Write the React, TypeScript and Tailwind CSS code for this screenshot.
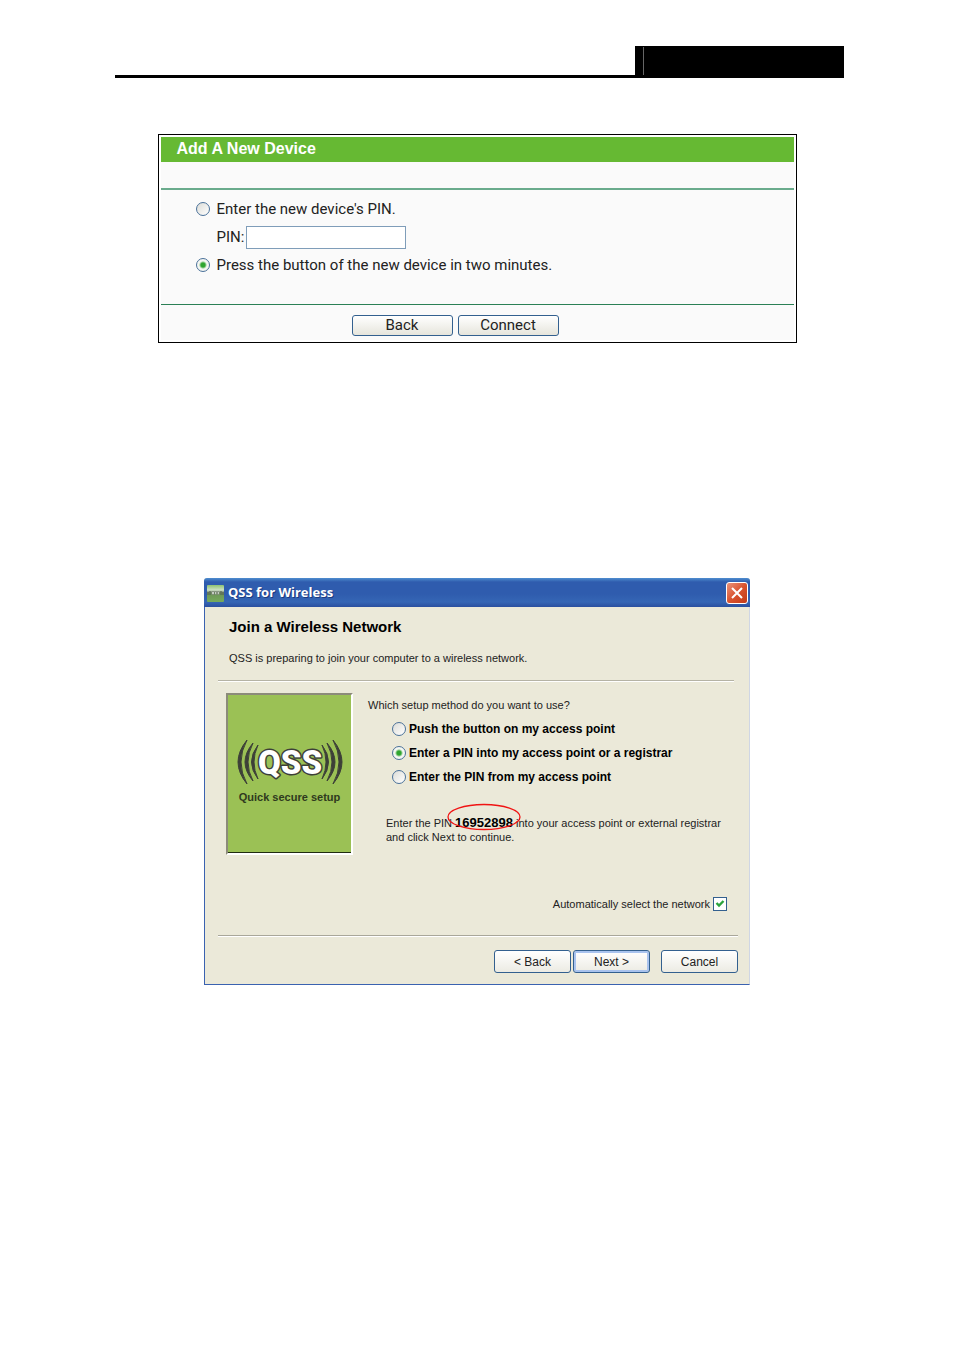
import { useState } from "react";

const setupMethods = [
  { id: "push", label: "Push the button on my access point" },
  { id: "enter", label: "Enter a PIN into my access point or a registrar" },
  { id: "from", label: "Enter the PIN from my access point" },
];

const radioClass =
  "appearance-none shrink-0 size-[14px] rounded-full border border-[#4a7199] bg-[linear-gradient(135deg,#dcdcd7,#fff)] checked:bg-[radial-gradient(circle,#2fa52f_0_2px,#f4f6f2_4px)]";

function PageHeader() {
  return (
    <header className="mt-[46px] ml-[115px] mr-[110px] border-b-[3px] border-black flex justify-end">
      <div className="w-[209px] h-[29px] bg-black pl-2 pt-px">
        <div className="w-px h-full bg-[#666]" />
      </div>
    </header>
  );
}

function AddDevice() {
  const [mode, setMode] = useState("button");

  return (
    <section className="mt-14 mx-auto w-full max-w-[639px] border border-black bg-white p-[2px] text-[15px] text-[#222]">
      <h2 className="h-[25px] bg-[#66b933] pl-4 font-bold text-[16px] leading-[24px] text-white">
        Add A New Device
      </h2>
      <form className="bg-[#fafafa] font-['Roboto',sans-serif]" onSubmit={(e) => e.preventDefault()}>
        <div className="h-[28px] border-b-2 border-[#6aab8c]" />
        <div className="h-[115px] border-b border-[#2b8055] pl-[35px] pt-[5px]">
          <label className="flex items-center gap-[7px] h-7">
            <input type="radio" name="mode" className={radioClass} checked={mode === "pin"} onChange={() => setMode("pin")} />
            Enter the new device's PIN.
          </label>
          <div className="flex items-center gap-[2px] h-7 pl-[21px]">
            <label htmlFor="pin" className="w-[27px]">PIN:</label>
            <input id="pin" type="text" className="w-[160px] h-[23px] border border-[#7f9db9] bg-white px-1" />
          </div>
          <label className="flex items-center gap-[7px] h-7">
            <input type="radio" name="mode" className={radioClass} checked={mode === "button"} onChange={() => setMode("button")} />
            Press the button of the new device in two minutes.
          </label>
        </div>
        <div className="flex justify-center gap-[5px] pt-[10px] pb-[4px] pr-[44px]">
          <button type="button" className="w-[101px] h-[21px] rounded-[3px] border border-[#33608f] bg-linear-to-b from-white to-[#e6e5dc] leading-[19px]">
            Back
          </button>
          <button type="submit" className="w-[101px] h-[21px] rounded-[3px] border border-[#33608f] bg-linear-to-b from-white to-[#e6e5dc] leading-[19px]">
            Connect
          </button>
        </div>
      </form>
    </section>
  );
}

function QssLogo() {
  return (
    <svg width="106" height="46" viewBox="0 0 106 46" aria-label="QSS" role="img">
      <g fill="#3d4038" stroke="#3d4038">
        <path d="M10 1Q-8 23 10 45Q-2 23 10 1Z" />
        <path d="M16 4Q0 23 16 42Q6 23 16 4Z" />
        <path d="M21 6Q8 23 21 40Q13 23 21 6Z" />
        <path d="M96 1Q114 23 96 45Q108 23 96 1Z" />
        <path d="M90 4Q106 23 90 42Q100 23 90 4Z" />
        <path d="M85 6Q98 23 85 40Q93 23 85 6Z" />
      </g>
      <text
        x="53"
        y="35"
        textAnchor="middle"
        fontFamily="Roboto, sans-serif"
        fontWeight="900"
        fontSize="33"
        fill="#fff"
        stroke="#3d4038"
        strokeWidth="3"
        strokeLinejoin="round"
        paintOrder="stroke"
      >
        QSS
      </text>
    </svg>
  );
}

function TitleBar() {
  return (
    <div className="flex items-center h-[29px] pt-px pl-[3px] pr-[2px] bg-[linear-gradient(#4e8ed0_0,#2f5cae_4px,#2f5cae_16px,#3566b5_24px,#2a4f9f_29px)]">
      <svg width="17" height="17" viewBox="0 0 17 17" aria-hidden="true">
        <defs>
          <linearGradient id="appIcon" x1="0" y1="0" x2="0" y2="1">
            <stop offset="0" stopColor="#8fc271" />
            <stop offset=".3" stopColor="#cfe2c6" />
            <stop offset=".42" stopColor="#7f9175" />
            <stop offset=".62" stopColor="#6f9a58" />
            <stop offset="1" stopColor="#76ab5c" />
          </linearGradient>
        </defs>
        <rect width="17" height="17" rx="1" fill="url(#appIcon)" />
        <path d="M1 7v3M3 6v4M14 6v4M16 7v3" stroke="#4c5a48" />
        <path d="M5 6.500h2v3h-2zM8 6.500h1.500v3h-1.500zM10.500 6.500h1.500v3h-1.500z" fill="#e6ebe3" stroke="#5d6b58" strokeWidth=".5" />
      </svg>
      <h2 className="ml-1 grow font-['Open_Sans',sans-serif] font-bold text-[13px] text-white [text-shadow:1px_1px_#1c3a80]">
        QSS for Wireless
      </h2>
      <button
        type="button"
        aria-label="Close"
        className="size-[22px] rounded-[3px] border border-white bg-linear-to-br from-[#e9927a] via-[#d9532f] to-[#c23a18] flex items-center justify-center"
      >
        <svg width="12" height="12" viewBox="0 0 12 12" stroke="#fff" strokeWidth="2">
          <path d="M1 1L11 11M11 1L1 11" />
        </svg>
      </button>
    </div>
  );
}

function QssWindow() {
  const [method, setMethod] = useState("enter");
  const [auto, setAuto] = useState(true);

  return (
    <section className="mt-[235px] mx-auto w-full max-w-[546px] rounded-t-[3px] overflow-hidden bg-[#ebe9d9] text-[11px] text-[#222]">
      <TitleBar />
      <form
        className="border-l border-l-[#3a62b0] border-r border-r-[#cfd6e4] border-b border-b-[#3a62b0] pl-[13px] pr-[11px] pb-[11px]"
        onSubmit={(e) => e.preventDefault()}
      >
        <div className="h-[74px] mr-1 pl-[11px] pt-[10px] border-b border-[#b5b3a5] shadow-[0_1px_#fff]">
          <h3 className="font-bold text-[15px] leading-5 text-black">Join a Wireless Network</h3>
          <p className="mt-[13px] leading-4">QSS is preparing to join your computer to a wireless network.</p>
        </div>

        <div className="flex pt-[12px] pl-2">
          <div className="shrink-0 w-[127px] h-[162px] border-2 border-t-[#8c8b7a] border-l-[#8c8b7a] border-r-white border-b-white bg-[#9bc155] shadow-[inset_0_-1px_#1f2b10] flex flex-col items-center pt-[44px]">
            <QssLogo />
            <p className="mt-1 font-bold text-[11px] leading-4 whitespace-nowrap text-[#2f3a1e]">Quick secure setup</p>
          </div>

          <fieldset className="ml-[15px] mt-1">
            <legend className="leading-4">Which setup method do you want to use?</legend>
            <div className="pl-6 pt-1 font-bold text-[12px] text-black">
              {setupMethods.map((m) => (
                <label key={m.id} className="flex items-center gap-[3px] h-6">
                  <input
                    type="radio"
                    name="method"
                    className={radioClass}
                    checked={method === m.id}
                    onChange={() => setMethod(m.id)}
                  />
                  {m.label}
                </label>
              ))}
            </div>
            <p className="mt-[27px] pl-[18px] leading-[14px]">
              Enter the PIN{" "}
              <span className="relative font-bold text-[13px] text-black">
                16952898
                <svg className="absolute -left-2 -top-3" width="74" height="28" viewBox="0 0 74 28" fill="none" aria-hidden="true">
                  <ellipse cx="37" cy="14" rx="36" ry="12.5" stroke="#f01414" strokeWidth="1.3" />
                </svg>
              </span>{" "}
              into your access point or external registrar
              <br />
              and click Next to continue.
            </p>
          </fieldset>
        </div>

        <div className="flex justify-end mt-[41px] mr-[11px]">
          <label className="flex items-center gap-[3px] h-4">
            Automatically select the network
            <span className="relative size-[14px]">
              <input
                type="checkbox"
                className="peer appearance-none block size-[14px] border border-[#33608f] bg-white"
                checked={auto}
                onChange={() => setAuto(!auto)}
              />
              <svg className="absolute inset-0 hidden peer-checked:block pointer-events-none" width="14" height="14" viewBox="0 0 14 14">
                <path d="M3.5 6L6 8.500L10.5 4" fill="none" stroke="#2ba43c" strokeWidth="2.4" />
              </svg>
            </span>
          </label>
        </div>

        <hr className="mt-[23px] border-0 h-px bg-[#a9a79a] shadow-[0_1px_#fff]" />

        <div className="mt-[14px] flex justify-end gap-[2px]">
          <button type="button" className="w-[77px] h-[23px] rounded-[3px] border border-[#33608f] bg-linear-to-b from-white to-[#ecebe3] text-[12px]">
            &lt; Back
          </button>
          <button type="submit" className="w-[77px] h-[23px] rounded-[3px] border border-[#33608f] bg-linear-to-b from-white to-[#ecebe3] shadow-[inset_0_0_0_2px_#a9c3ee] text-[12px]">
            Next &gt;
          </button>
          <button type="button" className="ml-[9px] w-[77px] h-[23px] rounded-[3px] border border-[#33608f] bg-linear-to-b from-white to-[#ecebe3] text-[12px]">
            Cancel
          </button>
        </div>
      </form>
    </section>
  );
}

export default function App() {
  return (
    <main className="flow-root min-h-screen bg-white font-['Liberation_Sans',Arial,sans-serif]">
      <PageHeader />
      <AddDevice />
      <QssWindow />
    </main>
  );
}
